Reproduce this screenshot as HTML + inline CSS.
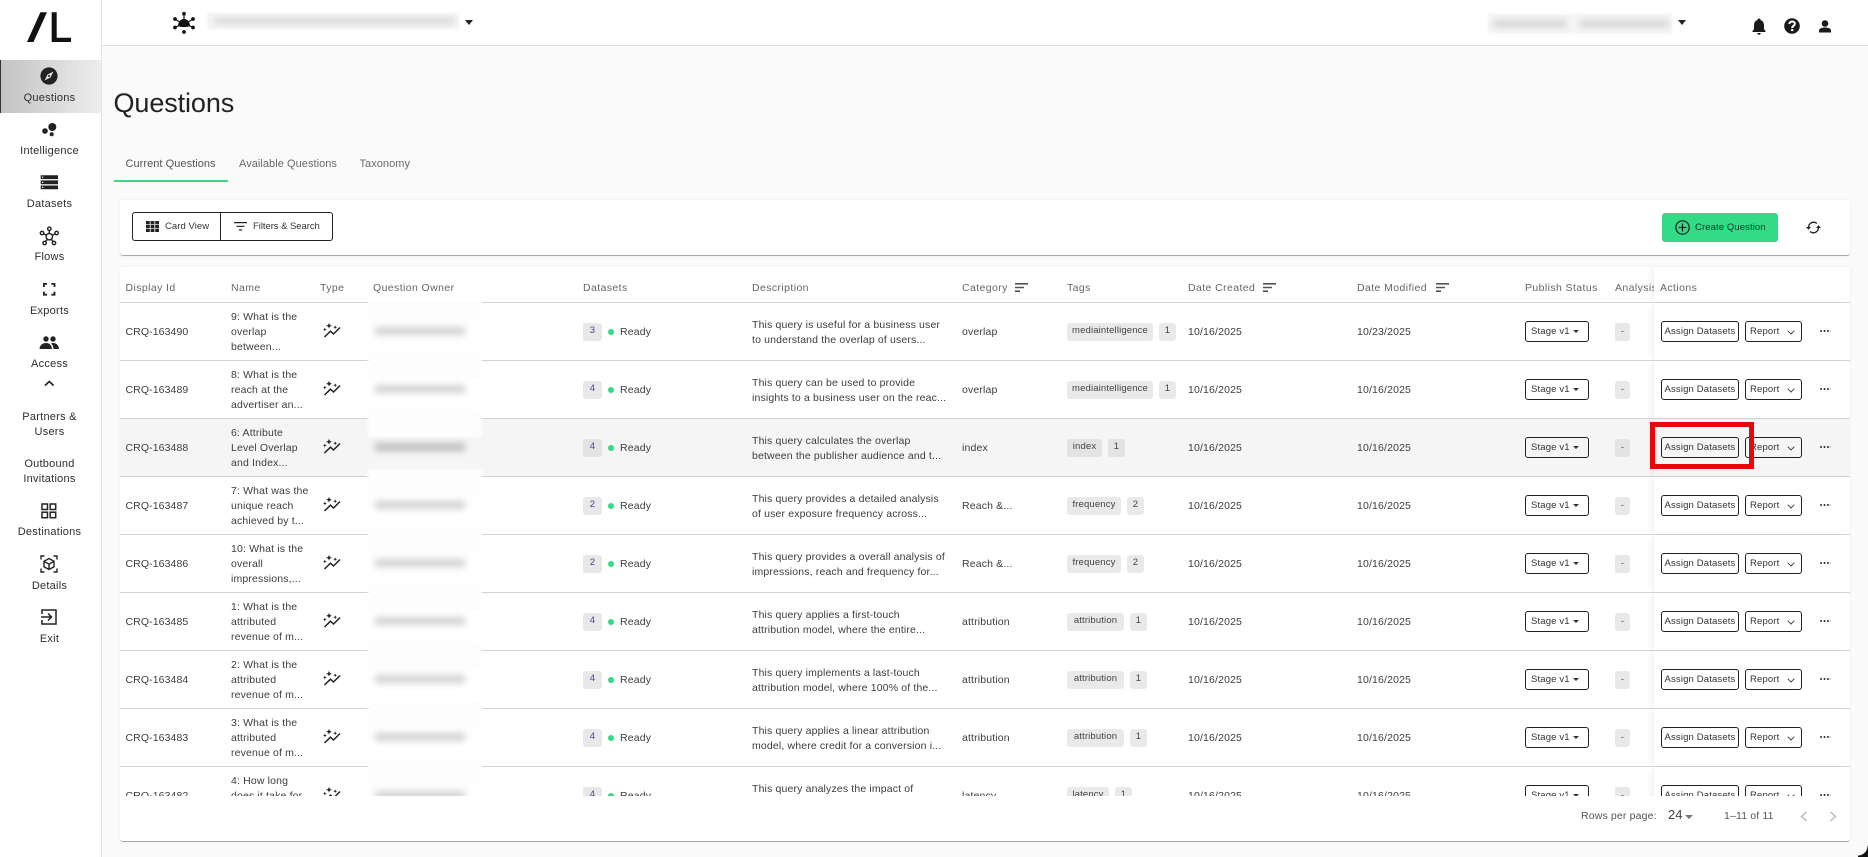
<!DOCTYPE html>
<html lang="en"><head><meta charset="utf-8"><title>Questions</title>
<style>
*{box-sizing:border-box;margin:0;padding:0}
html,body{width:1868px;height:857px;overflow:hidden;background:#fafafa;font-family:"Liberation Sans",Arial,sans-serif;color:#3d3d3d;font-size:10.5px;letter-spacing:.15px}
.a{position:absolute}
svg{position:absolute;overflow:visible}
#side{position:absolute;left:0;top:0;width:102px;height:857px;background:#fff;border-right:1px solid #e3e3e3}
#top{position:absolute;left:102px;top:0;width:1766px;height:46px;background:#fff;border-bottom:1px solid #e0e0e0}
.nl{position:absolute;left:0;width:99px;text-align:center;color:#2e2e2e;font-size:11px;line-height:15px;letter-spacing:.25px}
.tab{position:absolute;top:157px;font-size:11px;line-height:15px;color:#6a6a6a;letter-spacing:.05px}
.card{position:absolute;left:120px;width:1730px;background:#fff;border-radius:3px;border-bottom:1px solid #a8a8a8;box-shadow:0 0 3px rgba(0,0,0,.05)}
.h{position:absolute;top:280px;color:#666;font-size:10.5px;line-height:16px;letter-spacing:.4px;white-space:nowrap}
#clip{position:absolute;left:120px;top:302px;width:1730px;height:494px;overflow:hidden}
.r{position:absolute;left:0;width:1730px;height:58px;border-top:1px solid #d2d2d2;background:#fff}
.r.g{background:#f5f5f5}
.r>div{position:absolute;white-space:nowrap;line-height:15px}
.id{left:5.5px;top:22px;letter-spacing:.1px}
.nm{left:111px;top:7px}
.dc{left:632px;top:15px}
.ct{left:842px;top:22px}
.d1{left:1068px;top:22px}
.d2{left:1237px;top:22px}
.ds{left:463px;top:20px;width:19px;height:18px;background:#e8e8e8;border-radius:3px;text-align:center;color:#4a3da0;font-size:9.5px;line-height:16px!important}
.dt{left:488px;top:26px;width:6px;height:6px;border-radius:50%;background:#33db87}
.rd{left:500px;top:22px}
.tg,.tc{top:20px;height:18px;background:#e9e9e9;border-radius:3px;font-size:9.5px;line-height:16px!important;text-align:center;color:#444}
.g .tg,.g .tc,.g .ds,.g .an{background:#e3e3e3}
.ow{left:255px;top:24px;width:90px;height:8px;background:#d2d2d2;filter:blur(3.5px)}
.g .ow{background:#bdbdbd}
.wp{left:248px;top:-8px;width:114px;height:26px;background:#fdfdfd;filter:blur(1.5px)}
.st{left:1405px;top:18px;width:64px;height:21px;border:1px solid #222;border-radius:3px;font-size:9.5px;line-height:19px!important;padding-left:5px;color:#333}
.an{left:1495px;top:20px;width:15px;height:18px;background:#e8e8e8;border-radius:3px;text-align:center;font-size:9.5px;line-height:17px!important;color:#555}
.sk{left:1534px;top:0;width:196px;height:58px;background:#fff;box-shadow:-5px 0 6px -2px rgba(0,0,0,.06)}
.g .sk{background:#f5f5f5}
.ab{left:1541px;top:18px;width:78px;height:21px;border:1px solid #222;border-radius:3px;font-size:9.5px;line-height:19px!important;text-align:center;color:#333}
.rp{left:1625px;top:18px;width:57px;height:21px;border:1px solid #222;border-radius:3px;font-size:9.5px;line-height:19px!important;padding-left:4px;color:#333}
.ca{left:1453px;top:27px;width:0;height:0;border-left:3px solid transparent;border-right:3px solid transparent;border-top:3.5px solid #333}
.ch{left:1668px;top:24.5px;width:6px;height:6px;border-right:1.2px solid #333;border-bottom:1.2px solid #333;transform:rotate(45deg) scale(.85)}
.dm{left:1700px;top:27px;width:10.5px;height:2px;background:radial-gradient(circle at 1px 1px,#333 .9px,transparent 1.1px) 0 0/3.5px 2px repeat-x}
.ti{left:203px;top:19px;width:18px;height:16px}
.bl{position:absolute;background:#555;filter:blur(3px)}
</style></head><body>
<svg width="0" height="0" style="position:absolute"><defs>
<symbol id="ty" viewBox="0 0 18 16"><path fill="#222" d="M6 .5Q6.3 3.4 9 3.7Q6.3 4 6 6.9Q5.7 4 3 3.7Q5.700 3.400 6 .5ZM1.800 5.500Q2 7.300 3.800 7.500Q2 7.700 1.800 9.500Q1.600 7.700 -.2 7.500Q1.600 7.300 1.800 5.500ZM12.200 3.200Q12.400 5 14.200 5.200Q12.400 5.400 12.200 7.200Q12 5.400 10.200 5.200Q12 5 12.200 3.200Z"/><path fill="none" stroke="#222" stroke-width="1.500" d="M1.500 15L7.500 9.200L10.500 12L17 5.500"/></symbol>
<symbol id="so" viewBox="0 0 13 9"><path fill="#555" d="M0 0h13v1.600H0zM0 3.700h9v1.600H0zM0 7.400h5V9H0z"/></symbol>
</defs></svg>

<div id="side"></div>
<svg style="left:0;top:0" width="80" height="50"><path fill="#111" d="M27 42L40.400 12.300H47L33.500 42ZM51.700 12.300H56.700V37.800H71V42H51.700Z"/></svg>
<div class="a" style="left:0;top:60px;width:101px;height:53px;background:linear-gradient(90deg,#c3c3c3,#ededed);border-left:1px solid #333"></div>
<svg style="left:40px;top:67px" width="18" height="18"><circle cx="9" cy="9" r="8.600" fill="#222"/><path fill="#ddd" d="M13.500 4.500L10.500 10.500L4.500 13.500L7.500 7.500Z"/><circle cx="9" cy="9" r="1" fill="#222"/></svg>
<div class="nl" style="top:91px">Questions</div>
<svg style="left:40px;top:120px" width="18" height="18"><circle cx="12.300" cy="7" r="4" fill="#222"/><circle cx="5" cy="11" r="2.800" fill="#222"/><circle cx="11.700" cy="14.300" r="2" fill="#222"/></svg>
<div class="nl" style="top:144px">Intelligence</div>
<svg style="left:40px;top:175px" width="18" height="16"><path fill="#222" d="M.7.300h17.300v3.800H.7zM.7 5.400h17.300v3.800H.7zM.7 10.500h17.300v3.800H.7z"/><path fill="#fff" d="M2 1.600h1.300v1.200H2zM2 6.700h1.300v1.200H2zM2 11.800h1.300v1.200H2z"/></svg>
<div class="nl" style="top:197px">Datasets</div>
<svg style="left:39px;top:226px" width="21" height="21"><g fill="none" stroke="#222" stroke-width="1.400"><circle cx="10.300" cy="10.700" r="3.200"/><circle cx="10.300" cy="2.800" r="1.700"/><circle cx="3" cy="7" r="1.700"/><circle cx="17.600" cy="7" r="1.700"/><circle cx="5.600" cy="17" r="1.700"/><circle cx="15" cy="17" r="1.700"/><path d="M10.300 4.500V7.500M4.500 7.800L7.500 9.300M16 7.800L13.100 9.300M6.500 15.500L8.400 13.200M14.100 15.500L12.200 13.200"/></g></svg>
<div class="nl" style="top:250px">Flows</div>
<svg style="left:43px;top:283px" width="13" height="13"><path fill="none" stroke="#222" stroke-width="1.800" d="M.9 4V.9H4M8.400.9h3.100V4M11.500 8.600v3.100H8.400M4 11.700H.9V8.600"/></svg>
<div class="nl" style="top:304px">Exports</div>
<svg style="left:39px;top:336px" width="21" height="14"><circle cx="7" cy="3" r="2.700" fill="#222"/><circle cx="14" cy="3" r="2.700" fill="#222"/><path fill="#222" d="M.5 13C1 8.500 4 7 7 7C10 7 12.500 8.500 13 13ZM14 7C17 7 19.500 8.500 20 13H14.500C14.400 10.500 13.500 8.800 12 7.500C12.600 7.200 13.300 7 14 7Z"/></svg>
<div class="nl" style="top:357px">Access</div>
<svg style="left:44px;top:380px" width="11" height="7"><path fill="none" stroke="#222" stroke-width="1.700" d="M1 5.500L5.300 1.500L9.600 5.500"/></svg>
<div class="nl" style="top:410px">Partners &amp;<br>Users</div>
<div class="nl" style="top:457px">Outbound<br>Invitations</div>
<svg style="left:41px;top:503px" width="16" height="16"><g fill="none" stroke="#222" stroke-width="1.500"><rect x="1" y="1" width="5.500" height="5.500"/><rect x="9.200" y="1" width="5.500" height="5.500"/><rect x="1" y="9.200" width="5.500" height="5.500"/><rect x="9.200" y="9.200" width="5.500" height="5.500"/></g></svg>
<div class="nl" style="top:525px">Destinations</div>
<svg style="left:40px;top:555px" width="18" height="18"><g fill="none" stroke="#222" stroke-width="1.400"><path d="M1 4.500V1H4.500M13.500 1H17V4.500M17 13.500V17H13.500M4.500 17H1V13.500"/><path d="M9 3.500L14 6.300V11.800L9 14.500L4 11.800V6.300ZM4 6.300L9 9.200L14 6.300M9 9.200V14.500"/></g></svg>
<div class="nl" style="top:579px">Details</div>
<svg style="left:41px;top:609px" width="16" height="16"><path fill="none" stroke="#222" stroke-width="1.500" d="M1 5V1H15V15H1V11M0 8H10M7 4.500L10.500 8L7 11.500"/></svg>
<div class="nl" style="top:632px">Exit</div>

<div id="top"></div>
<svg style="left:173px;top:12px" width="22" height="22"><g fill="#111"><circle cx="11" cy="1.800" r="1.900"/><circle cx="11" cy="20" r="1.900"/><circle cx="2" cy="7" r="1.900"/><circle cx="20" cy="7" r="1.900"/><circle cx="2" cy="15.500" r="1.900"/><circle cx="20" cy="15.500" r="1.900"/><path d="M5 14C5 9.500 8 7 11 7C14 7 17 9.500 17 14C14 15.500 8 15.500 5 14Z"/></g><path stroke="#111" stroke-width="1.200" d="M11 2V8M2 7L7 10M20 7L15 10M2 15.500L7 13M20 15.500L15 13"/></svg>
<div class="a" style="left:207px;top:13px;width:252px;height:16px;background:#f4f4f4;filter:blur(1px)"></div>
<div class="bl" style="left:214px;top:18px;width:240px;height:6px;background:#dadada"></div>
<div class="a" style="left:465px;top:20px;width:0;height:0;border-left:4.500px solid transparent;border-right:4.500px solid transparent;border-top:5px solid #222"></div>
<div class="a" style="left:1488px;top:14px;width:184px;height:20px;background:#f4f4f4;filter:blur(1px)"></div>
<div class="bl" style="left:1494px;top:20px;width:72px;height:7px;background:#d6d6d6"></div>
<div class="bl" style="left:1580px;top:20px;width:88px;height:7px;background:#d6d6d6"></div>
<div class="a" style="left:1678px;top:20px;width:0;height:0;border-left:4.500px solid transparent;border-right:4.500px solid transparent;border-top:5px solid #222"></div>
<svg style="left:1752px;top:18px" width="14" height="17"><path fill="#1a1a1a" d="M7 0.500C8 .5 8.500 1 8.500 2C11 2.800 12 5 12 7.500V11L13.500 13V14H.5V13L2 11V7.500C2 5 3 2.800 5.500 2C5.500 1 6 .5 7 .5ZM5.300 15H8.700C8.700 16 8 16.800 7 16.800C6 16.800 5.300 16 5.300 15Z"/></svg>
<svg style="left:1784px;top:18px" width="16" height="16"><circle cx="8" cy="8" r="7.800" fill="#1a1a1a"/><path fill="none" stroke="#fff" stroke-width="2" d="M5.300 6C5.500 4.300 6.800 3.500 8.100 3.500C9.700 3.500 10.900 4.500 10.900 5.800C10.900 7.600 8.200 7.800 8.200 10"/><rect x="7.100" y="11" width="2.200" height="2.100" fill="#fff"/></svg>
<svg style="left:1818px;top:20px" width="14" height="13"><circle cx="7" cy="3.500" r="3.300" fill="#1a1a1a"/><path fill="#1a1a1a" d="M1 12.500V10.500C1 8.500 4 7.500 7 7.500C10 7.500 13 8.500 13 10.500V12.500Z"/></svg>

<div class="a" style="left:113.500px;top:86px;font-size:27px;line-height:34px;color:#222;letter-spacing:-.1px">Questions</div>
<div class="tab" style="left:125.500px;color:#555">Current Questions</div>
<div class="tab" style="left:239px">Available Questions</div>
<div class="tab" style="left:359.500px">Taxonomy</div>
<div class="a" style="left:114px;top:180px;width:114px;height:2px;background:#33db87"></div>

<div class="card" style="top:200px;height:56px"></div>
<div class="a" style="left:132px;top:212px;width:89px;height:29px;border:1px solid #222;border-radius:3px 0 0 3px;background:#fff"></div>
<div class="a" style="left:220px;top:212px;width:113px;height:29px;border:1px solid #222;border-radius:0 3px 3px 0;background:#fff"></div>
<svg style="left:146px;top:221px" width="13" height="11"><path fill="#222" d="M0 0h3.800v3.200H0zM4.600 0h3.800v3.200H4.600zM9.200 0h3.800v3.200H9.200zM0 3.900h3.800v3.200H0zM4.600 3.900h3.800v3.200H4.600zM9.200 3.900h3.800v3.200H9.200zM0 7.800h3.800v3.200H0zM4.600 7.800h3.800v3.200H4.600zM9.200 7.800h3.800v3.200H9.200z"/></svg>
<div class="a" style="left:165px;top:219px;font-size:9.5px;line-height:15px;color:#333;letter-spacing:.05px">Card View</div>
<svg style="left:234px;top:222px" width="13" height="9"><path fill="#222" d="M0 0h13v1.200H0zM2.500 3.700h8v1.200h-8zM5 7.400h3v1.200H5z"/></svg>
<div class="a" style="left:253px;top:219px;font-size:9.5px;line-height:15px;color:#333;letter-spacing:-.05px">Filters &amp; Search</div>
<div class="a" style="left:1662px;top:213px;width:116px;height:29px;background:#33db87;border-radius:3px"></div>
<svg style="left:1675px;top:220px" width="15" height="15"><circle cx="7.500" cy="7.500" r="6.700" fill="none" stroke="#1c1c1c" stroke-width="1.200"/><path stroke="#1c1c1c" stroke-width="1.200" d="M7.500 3.500V11.500M3.500 7.500H11.500"/></svg>
<div class="a" style="left:1695px;top:220px;font-size:9.500px;line-height:15px;color:#143826;letter-spacing:.1px">Create Question</div>
<svg style="left:1806px;top:221px" width="15" height="13"><path fill="none" stroke="#222" stroke-width="1.300" d="M2.500 6.500C2.500 3.500 5 1.200 7.500 1.200C9 1.200 10 1.700 10.800 2.500M12.500 6.500C12.500 9.500 10 11.800 7.500 11.800C6 11.800 5 11.300 4.200 10.500"/><path fill="#222" d="M0 6H5L2.500 8.800ZM10 7H15L12.500 4.200Z"/></svg>

<div class="card" style="top:267px;height:575px"></div>
<div class="h" style="left:125.500px">Display Id</div>
<div class="h" style="left:231px">Name</div>
<div class="h" style="left:320px">Type</div>
<div class="h" style="left:373px">Question Owner</div>
<div class="h" style="left:583px">Datasets</div>
<div class="h" style="left:752px">Description</div>
<div class="h" style="left:962px">Category</div>
<svg style="left:1015px;top:283px" width="13" height="9"><use href="#so"/></svg>
<div class="h" style="left:1067px">Tags</div>
<div class="h" style="left:1188px">Date Created</div>
<svg style="left:1263px;top:283px" width="13" height="9"><use href="#so"/></svg>
<div class="h" style="left:1357px">Date Modified</div>
<svg style="left:1436px;top:283px" width="13" height="9"><use href="#so"/></svg>
<div class="h" style="left:1525px">Publish Status</div>
<div class="h" style="left:1615px;width:39px;overflow:hidden">Analysis</div>
<div class="a" style="left:1654px;top:267px;width:196px;height:35px;background:#fff;box-shadow:-5px 0 6px -2px rgba(0,0,0,.06);border-radius:0 3px 0 0"></div>
<div class="h" style="left:1660px">Actions</div>

<div id="clip">
<div class="r" style="top:0"><div class="id">CRQ-163490</div><div class="nm">9: What is the<br>overlap<br>between...</div><svg class="ti" width="18" height="16"><use href="#ty"/></svg><div class="wp"></div><div class="ow"></div><div class="ds">3</div><div class="dt"></div><div class="rd">Ready</div><div class="dc">This query is useful for a business user<br>to understand the overlap of users...</div><div class="ct">overlap</div><div class="tg" style="left:947px;width:86px">mediaintelligence</div><div class="tc" style="left:1039px;width:17px">1</div><div class="d1">10/16/2025</div><div class="d2">10/23/2025</div><div class="st">Stage v1</div><div class="ca"></div><div class="an">-</div><div class="sk"></div><div class="ab">Assign Datasets</div><div class="rp">Report</div><div class="ch"></div><div class="dm"></div></div>

<div class="r" style="top:58px"><div class="id">CRQ-163489</div><div class="nm">8: What is the<br>reach at the<br>advertiser an...</div><svg class="ti" width="18" height="16"><use href="#ty"/></svg><div class="wp"></div><div class="ow"></div><div class="ds">4</div><div class="dt"></div><div class="rd">Ready</div><div class="dc">This query can be used to provide<br>insights to a business user on the reac...</div><div class="ct">overlap</div><div class="tg" style="left:947px;width:86px">mediaintelligence</div><div class="tc" style="left:1039px;width:17px">1</div><div class="d1">10/16/2025</div><div class="d2">10/16/2025</div><div class="st">Stage v1</div><div class="ca"></div><div class="an">-</div><div class="sk"></div><div class="ab">Assign Datasets</div><div class="rp">Report</div><div class="ch"></div><div class="dm"></div></div>

<div class="r g" style="top:116px"><div class="id">CRQ-163488</div><div class="nm">6: Attribute<br>Level Overlap<br>and Index...</div><svg class="ti" width="18" height="16"><use href="#ty"/></svg><div class="wp"></div><div class="ow"></div><div class="ds">4</div><div class="dt"></div><div class="rd">Ready</div><div class="dc">This query calculates the overlap<br>between the publisher audience and t...</div><div class="ct">index</div><div class="tg" style="left:947px;width:35px">index</div><div class="tc" style="left:988px;width:17px">1</div><div class="d1">10/16/2025</div><div class="d2">10/16/2025</div><div class="st">Stage v1</div><div class="ca"></div><div class="an">-</div><div class="sk"></div><div class="ab">Assign Datasets</div><div class="rp">Report</div><div class="ch"></div><div class="dm"></div></div>

<div class="r" style="top:174px"><div class="id">CRQ-163487</div><div class="nm">7: What was the<br>unique reach<br>achieved by t...</div><svg class="ti" width="18" height="16"><use href="#ty"/></svg><div class="wp"></div><div class="ow"></div><div class="ds">2</div><div class="dt"></div><div class="rd">Ready</div><div class="dc">This query provides a detailed analysis<br>of user exposure frequency across...</div><div class="ct">Reach &amp;...</div><div class="tg" style="left:947px;width:54px">frequency</div><div class="tc" style="left:1007px;width:17px">2</div><div class="d1">10/16/2025</div><div class="d2">10/16/2025</div><div class="st">Stage v1</div><div class="ca"></div><div class="an">-</div><div class="sk"></div><div class="ab">Assign Datasets</div><div class="rp">Report</div><div class="ch"></div><div class="dm"></div></div>

<div class="r" style="top:232px"><div class="id">CRQ-163486</div><div class="nm">10: What is the<br>overall<br>impressions,...</div><svg class="ti" width="18" height="16"><use href="#ty"/></svg><div class="wp"></div><div class="ow"></div><div class="ds">2</div><div class="dt"></div><div class="rd">Ready</div><div class="dc">This query provides a overall analysis of<br>impressions, reach and frequency for...</div><div class="ct">Reach &amp;...</div><div class="tg" style="left:947px;width:54px">frequency</div><div class="tc" style="left:1007px;width:17px">2</div><div class="d1">10/16/2025</div><div class="d2">10/16/2025</div><div class="st">Stage v1</div><div class="ca"></div><div class="an">-</div><div class="sk"></div><div class="ab">Assign Datasets</div><div class="rp">Report</div><div class="ch"></div><div class="dm"></div></div>

<div class="r" style="top:290px"><div class="id">CRQ-163485</div><div class="nm">1: What is the<br>attributed<br>revenue of m...</div><svg class="ti" width="18" height="16"><use href="#ty"/></svg><div class="wp"></div><div class="ow"></div><div class="ds">4</div><div class="dt"></div><div class="rd">Ready</div><div class="dc">This query applies a first-touch<br>attribution model, where the entire...</div><div class="ct">attribution</div><div class="tg" style="left:947px;width:57px">attribution</div><div class="tc" style="left:1010px;width:17px">1</div><div class="d1">10/16/2025</div><div class="d2">10/16/2025</div><div class="st">Stage v1</div><div class="ca"></div><div class="an">-</div><div class="sk"></div><div class="ab">Assign Datasets</div><div class="rp">Report</div><div class="ch"></div><div class="dm"></div></div>

<div class="r" style="top:348px"><div class="id">CRQ-163484</div><div class="nm">2: What is the<br>attributed<br>revenue of m...</div><svg class="ti" width="18" height="16"><use href="#ty"/></svg><div class="wp"></div><div class="ow"></div><div class="ds">4</div><div class="dt"></div><div class="rd">Ready</div><div class="dc">This query implements a last-touch<br>attribution model, where 100% of the...</div><div class="ct">attribution</div><div class="tg" style="left:947px;width:57px">attribution</div><div class="tc" style="left:1010px;width:17px">1</div><div class="d1">10/16/2025</div><div class="d2">10/16/2025</div><div class="st">Stage v1</div><div class="ca"></div><div class="an">-</div><div class="sk"></div><div class="ab">Assign Datasets</div><div class="rp">Report</div><div class="ch"></div><div class="dm"></div></div>

<div class="r" style="top:406px"><div class="id">CRQ-163483</div><div class="nm">3: What is the<br>attributed<br>revenue of m...</div><svg class="ti" width="18" height="16"><use href="#ty"/></svg><div class="wp"></div><div class="ow"></div><div class="ds">4</div><div class="dt"></div><div class="rd">Ready</div><div class="dc">This query applies a linear attribution<br>model, where credit for a conversion i...</div><div class="ct">attribution</div><div class="tg" style="left:947px;width:57px">attribution</div><div class="tc" style="left:1010px;width:17px">1</div><div class="d1">10/16/2025</div><div class="d2">10/16/2025</div><div class="st">Stage v1</div><div class="ca"></div><div class="an">-</div><div class="sk"></div><div class="ab">Assign Datasets</div><div class="rp">Report</div><div class="ch"></div><div class="dm"></div></div>

<div class="r" style="top:464px"><div class="id">CRQ-163482</div><div class="nm">4: How long<br>does it take for<br>the...</div><svg class="ti" width="18" height="16"><use href="#ty"/></svg><div class="wp"></div><div class="ow"></div><div class="ds">4</div><div class="dt"></div><div class="rd">Ready</div><div class="dc">This query analyzes the impact of<br>latency on conversions...</div><div class="ct">latency</div><div class="tg" style="left:947px;width:42px">latency</div><div class="tc" style="left:995px;width:17px">1</div><div class="d1">10/16/2025</div><div class="d2">10/16/2025</div><div class="st">Stage v1</div><div class="ca"></div><div class="an">-</div><div class="sk"></div><div class="ab">Assign Datasets</div><div class="rp">Report</div><div class="ch"></div><div class="dm"></div></div>
</div>

<div class="a" style="left:1581px;top:808px;line-height:16px;color:#555;font-size:10.5px">Rows per page:</div>
<div class="a" style="left:1668px;top:807px;line-height:16px;color:#444;font-size:13px;letter-spacing:0">24</div>
<div class="a" style="left:1685px;top:815px;width:0;height:0;border-left:4px solid transparent;border-right:4px solid transparent;border-top:4px solid #777"></div>
<div class="a" style="left:1724px;top:808px;line-height:16px;color:#555;font-size:10.5px">1–11 of 11</div>
<svg style="left:1800px;top:811px" width="8" height="11"><path fill="none" stroke="#bbb" stroke-width="1.500" d="M6.500 1L1.500 5.500L6.500 10"/></svg>
<svg style="left:1829px;top:811px" width="8" height="11"><path fill="none" stroke="#bbb" stroke-width="1.500" d="M1.500 1L6.500 5.500L1.500 10"/></svg>

<div class="a" style="left:1650px;top:422px;width:104px;height:47px;border:5px solid #e60707"></div>
<div class="a" style="left:1858px;top:846px;width:10px;height:11px;background:radial-gradient(circle at 0 0,transparent 9px,#111 10px)"></div>
</body></html>
